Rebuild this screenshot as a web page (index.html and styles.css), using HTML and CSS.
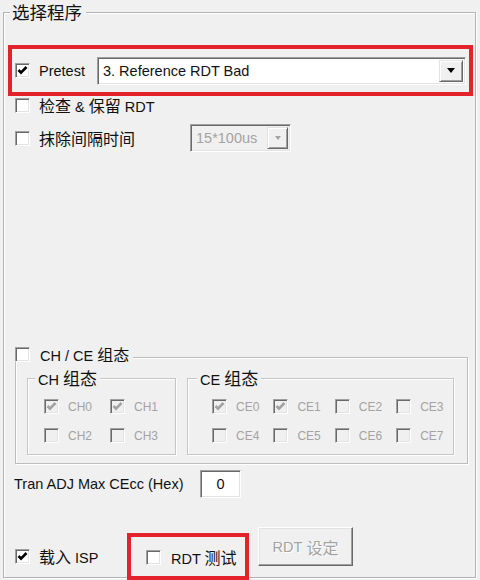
FILE: index.html
```html
<!DOCTYPE html>
<html lang="zh">
<head>
<meta charset="utf-8">
<title>选择程序</title>
<link rel="stylesheet" href="styles.css">
</head>
<body>
<div class="main">
  <span class="legend zh">选择程序</span>

  <div class="red red1">
    <label class="chk w-pre"><span class="box"><svg viewBox="0 0 13 13" width="13" height="13"><path d="M2.5 6 L5 8.6 L10.5 3" fill="none" stroke="#000" stroke-width="2.6"/></svg></span><span class="txt">Pretest</span></label>
    <div class="combo big"><span class="ctext">3. Reference RDT Bad</span><span class="dbtn"><span class="tri"></span></span></div>
  </div>

  <div class="row r2">
    <label class="chk"><span class="box"></span><span class="txt"><span class="zh">检查</span> &amp; <span class="zh">保留</span> RDT</span></label>
  </div>

  <div class="row r3">
    <label class="chk w-erase"><span class="box"></span><span class="txt zh">抹除间隔时间</span></label>
    <div class="combo small"><span class="ctext">15*100us</span><span class="dbtn"><span class="tri"></span></span></div>
  </div>

  <div class="grp chce">
    <label class="chk glegend"><span class="box"></span><span class="txt">CH / CE <span class="zh">组态</span></span></label>
    <div class="subs">
      <div class="grp sub ch">
        <span class="slegend">CH <span class="zh">组态</span></span>
        <div class="grid">
          <label class="chk dis"><span class="box"><svg viewBox="0 0 13 13" width="13" height="13"><path d="M2.5 6 L5 8.6 L10.5 3" fill="none" stroke="#a3a3a3" stroke-width="2.6"/></svg></span><span class="txt">CH0</span></label>
          <label class="chk dis"><span class="box"><svg viewBox="0 0 13 13" width="13" height="13"><path d="M2.5 6 L5 8.6 L10.5 3" fill="none" stroke="#a3a3a3" stroke-width="2.6"/></svg></span><span class="txt">CH1</span></label>
          <label class="chk dis"><span class="box"></span><span class="txt">CH2</span></label>
          <label class="chk dis"><span class="box"></span><span class="txt">CH3</span></label>
        </div>
      </div>
      <div class="grp sub ce">
        <span class="slegend">CE <span class="zh">组态</span></span>
        <div class="grid">
          <label class="chk dis"><span class="box"><svg viewBox="0 0 13 13" width="13" height="13"><path d="M2.5 6 L5 8.6 L10.5 3" fill="none" stroke="#a3a3a3" stroke-width="2.6"/></svg></span><span class="txt">CE0</span></label>
          <label class="chk dis"><span class="box"><svg viewBox="0 0 13 13" width="13" height="13"><path d="M2.5 6 L5 8.6 L10.5 3" fill="none" stroke="#a3a3a3" stroke-width="2.6"/></svg></span><span class="txt">CE1</span></label>
          <label class="chk dis"><span class="box"></span><span class="txt">CE2</span></label>
          <label class="chk dis"><span class="box"></span><span class="txt">CE3</span></label>
          <label class="chk dis"><span class="box"></span><span class="txt">CE4</span></label>
          <label class="chk dis"><span class="box"></span><span class="txt">CE5</span></label>
          <label class="chk dis"><span class="box"></span><span class="txt">CE6</span></label>
          <label class="chk dis"><span class="box"></span><span class="txt">CE7</span></label>
        </div>
      </div>
    </div>
  </div>

  <div class="row tran">
    <span class="tlabel">Tran ADJ Max CEcc (Hex)</span>
    <div class="edit">0</div>
  </div>

  <div class="row bottom">
    <label class="chk isp"><span class="box"><svg viewBox="0 0 13 13" width="13" height="13"><path d="M2.5 6 L5 8.6 L10.5 3" fill="none" stroke="#000" stroke-width="2.6"/></svg></span><span class="txt"><span class="zh">载入</span> ISP</span></label>
    <div class="red red2">
      <label class="chk"><span class="box"></span><span class="txt">RDT <span class="zh">测试</span></span></label>
    </div>
    <div class="btn">RDT <span class="zh">设定</span></div>
  </div>
</div>
</body>
</html>
```

FILE: styles.css
```css
* { box-sizing: border-box; }

html, body {
  margin: 0;
  overflow: hidden;
}

body {
  width: 480px;
  height: 580px;
  padding: 12px 0 0 3px;
  background: #f0f0f0;
  color: #111;
  font-family: "Liberation Sans", "Noto Sans CJK SC", sans-serif;
  font-size: 14.5px;
}

.zh {
  font-family: "Noto Sans CJK SC", sans-serif;
  font-size: 16px;
}

.main {
  position: relative;
  width: 473px;
  height: 566px;
  padding-top: 32px;
  border: 1px solid #b4b4b4;
  box-shadow: inset 1px 1px 0 #fff, 1px 1px 0 #fff;
}

.legend {
  position: absolute;
  top: -12px;
  left: 6px;
  padding: 0 4px 0 2px;
  background: #f0f0f0;
  font-size: 17.5px;
  line-height: 22px;
}

.red { border: 4px solid #e3222c; }

.red1 {
  display: flex;
  align-items: center;
  height: 51px;
  margin: 0 2px 0 4px;
  padding-left: 3px;
}

.chk {
  display: flex;
  align-items: center;
  height: 15px;
}

.box {
  flex: none;
  width: 15px;
  height: 15px;
  background: #fff;
  border: 1px solid;
  border-color: #a0a0a0 #fff #fff #a0a0a0;
  box-shadow: inset 1px 1px 0 #696969, inset -1px -1px 0 #e3e3e3;
}

.box svg { display: block; }

.txt {
  margin-left: 9px;
  line-height: 16px;
  white-space: nowrap;
}

.w-pre { flex: 1; }

.combo {
  display: flex;
  align-items: stretch;
  height: 28px;
  padding: 2px;
  background: #fff;
  border: 1px solid;
  border-color: #a0a0a0 #fff #fff #a0a0a0;
  box-shadow: inset 1px 1px 0 #696969, inset -1px -1px 0 #e3e3e3;
}

.ctext {
  flex: 1;
  display: flex;
  align-items: center;
  padding-left: 3px;
  white-space: nowrap;
}

.dbtn {
  display: flex;
  align-items: center;
  justify-content: center;
  width: 24px;
  background: #f0f0f0;
  border: 1px solid;
  border-color: #e3e3e3 #696969 #696969 #e3e3e3;
  box-shadow: inset 1px 1px 0 #fff, inset -1px -1px 0 #a0a0a0;
}

.tri {
  width: 0;
  height: 0;
  border-left: 4.5px solid transparent;
  border-right: 4.5px solid transparent;
  border-top: 5px solid #000;
}

.big {
  width: 369px;
  margin-right: 3px;
}

.row {
  display: flex;
  align-items: center;
}

.r2 {
  height: 19px;
  margin-left: 11px;
}

.r3 {
  height: 28px;
  margin: 9px 0 0 11px;
}

.w-erase { width: 175px; }

.small {
  width: 101px;
  background: #f0f0f0;
  color: #a3a3a3;
}

.small .dbtn { width: 21px; }

.small .tri {
  border-left-width: 3.5px;
  border-right-width: 3.5px;
  border-top-width: 4px;
  border-top-color: #a3a3a3;
}

.grp {
  position: relative;
  border: 1px solid #bcbcbc;
  box-shadow: inset 1px 1px 0 #fff, 1px 1px 0 #fff;
}

.chce {
  height: 107px;
  margin: 205px 7px 0 11px;
  padding: 20px 0 0 11px;
}

.glegend {
  position: absolute;
  top: -11px;
  left: -1px;
  padding-right: 4px;
  background: #f0f0f0;
}

.glegend .txt { margin-left: 10px; }

.subs {
  display: flex;
  gap: 11px;
}

.sub {
  height: 77px;
  border-color: #c6c6c6;
}

.ch {
  width: 149px;
  padding: 20px 0 0 16px;
}

.ce {
  width: 267px;
  padding: 20px 0 0 24px;
}

.slegend {
  position: absolute;
  top: -11px;
  left: 7px;
  padding: 0 3px;
  background: #f0f0f0;
  line-height: 20px;
  white-space: nowrap;
}

.slegend .zh { font-size: 17px; }

.ce .slegend { left: 9px; }

.grid {
  display: grid;
  row-gap: 14px;
}

.ch .grid { grid-template-columns: 66px 66px; }
.ce .grid { grid-template-columns: repeat(4, 61.4px); }

.dis .box {
  background: #f0f0f0;
}

.dis .txt {
  color: #a3a3a3;
  font-size: 12px;
}

.tran {
  height: 28px;
  margin: 6px 0 0 10px;
}

.tlabel {
  width: 186px;
  white-space: nowrap;
}

.edit {
  display: flex;
  align-items: center;
  justify-content: center;
  width: 41px;
  height: 28px;
  background: #fff;
  border: 1px solid;
  border-color: #a0a0a0 #fff #fff #a0a0a0;
  box-shadow: inset 1px 1px 0 #696969, inset -1px -1px 0 #e3e3e3;
}

.bottom {
  align-items: flex-start;
  margin-left: 11px;
}

.isp {
  width: 112px;
  margin-top: 51px;
}

.red2 {
  flex: none;
  width: 122px;
  height: 47px;
  margin-top: 35px;
  padding: 13px 0 0 15px;
}

.red2 .txt { margin-left: 10px; }

.btn {
  display: flex;
  align-items: center;
  justify-content: center;
  flex: none;
  width: 95px;
  height: 39px;
  margin: 29px 0 0 9px;
  background: #f0f0f0;
  color: #a3a3a3;
  text-shadow: 1px 1px 0 #fff;
  border: 1px solid;
  border-color: #fff #696969 #696969 #fff;
  box-shadow: inset -1px -1px 0 #a0a0a0, inset 1px 1px 0 #e3e3e3;
  white-space: nowrap;
}

.btn .zh { margin-left: 4px; }
```
